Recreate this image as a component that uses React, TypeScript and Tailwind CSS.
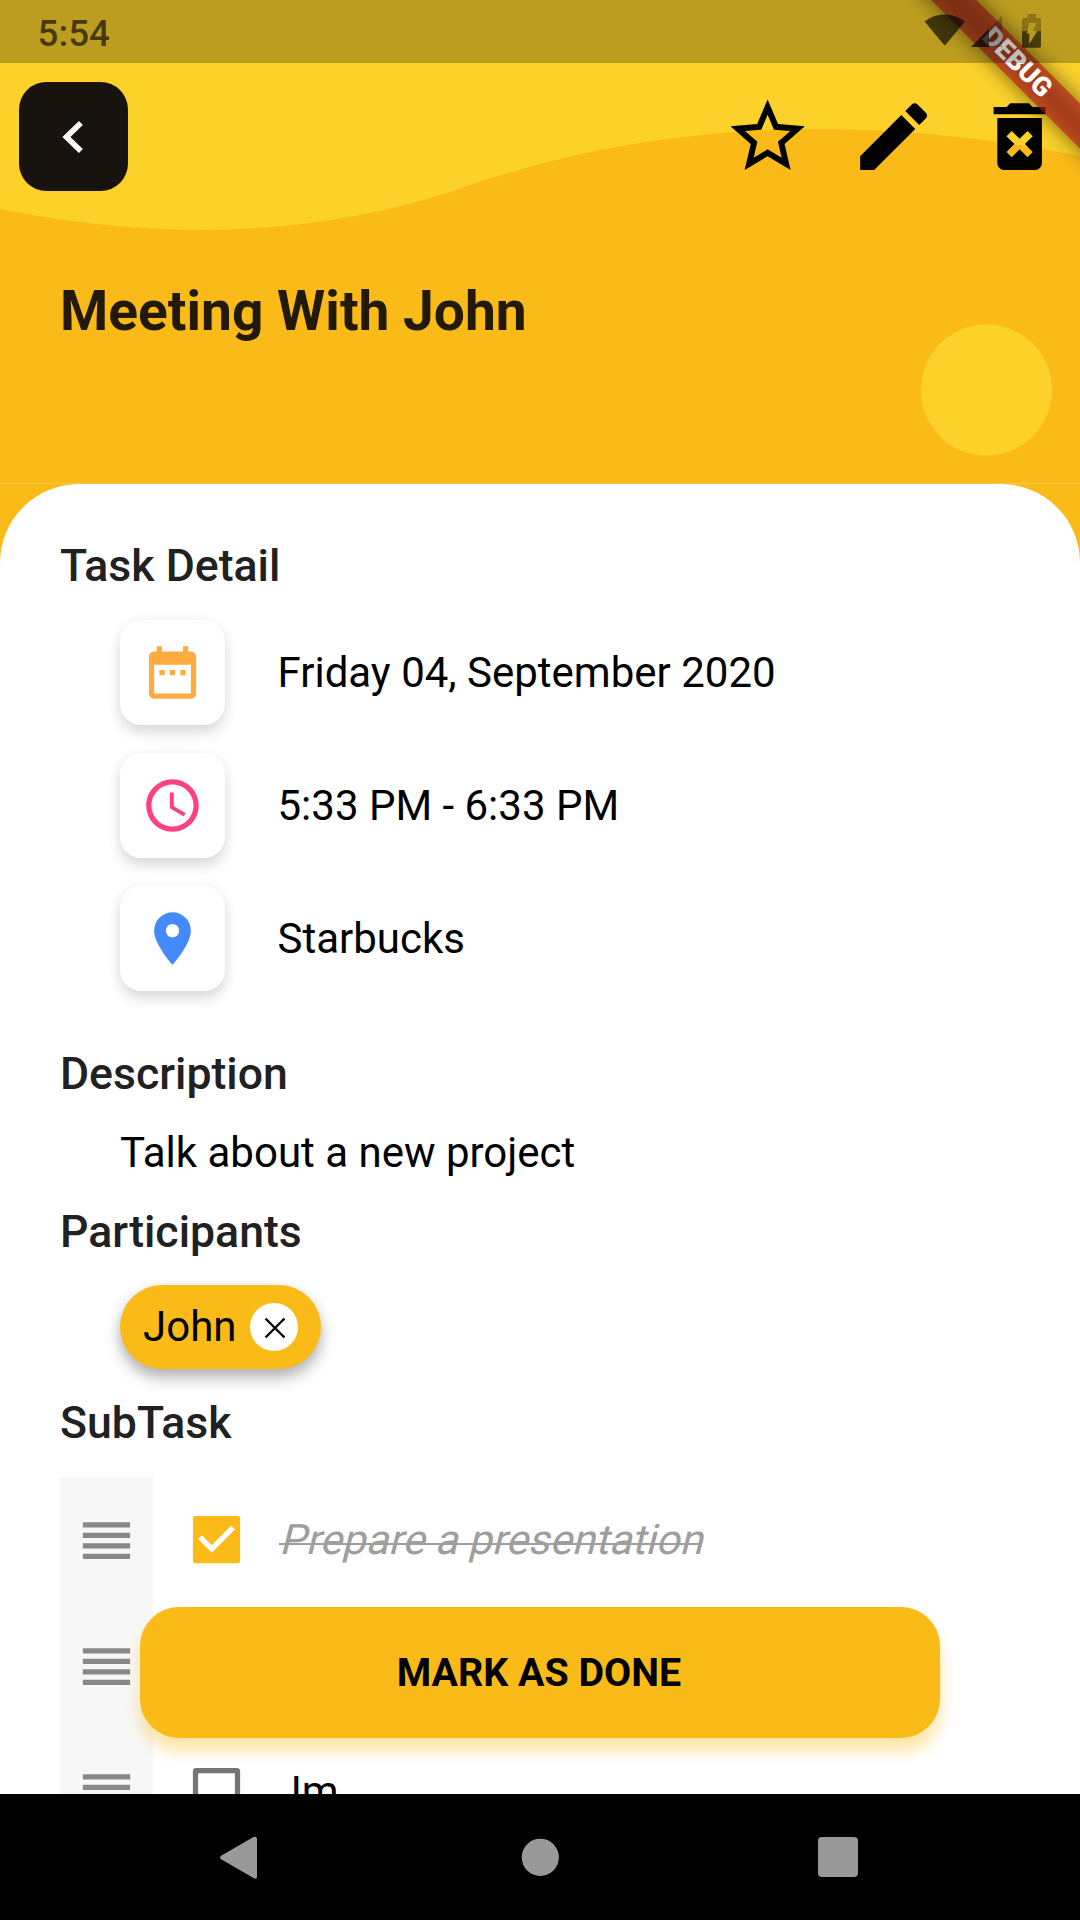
import React from "react";

const icons = {
  star: "M22 9.24l-7.19-.62L12 2 9.19 8.63 2 9.24l5.46 4.73L5.82 21 12 17.27 18.18 21l-1.63-7.03L22 9.24zM12 15.4l-3.76 2.27 1-4.28-3.32-2.88 4.38-.38L12 6.1l1.71 4.04 4.38.38-3.32 2.88 1 4.28L12 15.4z",
  edit: "M3 17.25V21h3.75L17.81 9.94l-3.75-3.75L3 17.25zM20.71 7.04c.39-.39.39-1.02 0-1.41l-2.34-2.34c-.39-.39-1.02-.39-1.41 0l-1.83 1.83 3.75 3.75 1.83-1.83z",
  remove:
    "M6 19c0 1.1.9 2 2 2h8c1.1 0 2-.9 2-2V7H6v12zm2.46-7.12l1.41-1.41L12 12.59l2.12-2.12 1.41 1.41L13.41 14l2.12 2.12-1.41 1.41L12 15.41l-2.12 2.12-1.41-1.41L10.59 14l-2.13-2.12zM15.5 4l-1-1h-5l-1 1H5v2h14V4z",
  date: "M9 11H7v2h2v-2zm4 0h-2v2h2v-2zm4 0h-2v2h2v-2zm2-7h-1V2h-2v2H8V2H6v2H5c-1.11 0-1.99.9-1.99 2L3 20c0 1.1.89 2 2 2h14c1.1 0 2-.9 2-2V6c0-1.1-.9-2-2-2zm0 16H5V9h14v11z",
  clock:
    "M11.99 2C6.47 2 2 6.48 2 12s4.47 10 9.99 10C17.52 22 22 17.52 22 12S17.52 2 11.99 2zM12 20c-4.42 0-8-3.58-8-8s3.58-8 8-8 8 3.58 8 8-3.58 8-8 8zM12.5 7H11v6l5.25 3.15.75-1.23-4.5-2.67z",
  place:
    "M12 2C8.13 2 5 5.13 5 9c0 5.25 7 13 7 13s7-7.75 7-13c0-3.87-3.13-7-7-7zm0 9.5c-1.38 0-2.5-1.12-2.5-2.5s1.12-2.5 2.5-2.5 2.5 1.12 2.5 2.5-1.12 2.5-2.5 2.5z",
  reorder: "M3 15h18v-2H3v2zm0 4h18v-2H3v2zm0-8h18V9H3v2zm0-6v2h18V5H3z",
};

function Icon({ d, className }: { d: string; className: string }) {
  return (
    <svg viewBox="0 0 24 24" fill="currentColor" fillRule="evenodd" className={className}>
      <path d={d} />
    </svg>
  );
}

function StatusBar() {
  return (
    <div className="relative z-20 flex h-[63px] items-center justify-between bg-black/25 pl-[37.600px] pr-[38px]">
      <span className="pt-[3px] text-[36.75px] font-medium leading-[43px] text-black/65">5:54</span>
      <svg viewBox="924 0 118 63" className="h-[63px] w-[118px]">
        <path
          d="M924.6 21.5C936 12 953 12 965 21.5L945.8 44.5Q944.8 46 943.7 44.5Z"
          className="fill-black/65"
        />
        <path d="M1002 16V47H971Z" className="fill-black/25" />
        <path d="M989 29V47H971Z" className="fill-black/60" />
        <path
          d="M1027.5 14h8.500v4h3.300q1.700 0 1.700 1.700V31h-19V19.700q0-1.700 1.700-1.700h3.800z"
          className="fill-black/25"
        />
        <path d="M1022 31h19v15q0 1.700-1.700 1.700h-15.600q-1.700 0-1.700-1.700z" className="fill-black/60" />
        <path d="M1029.300 23H1036.300L1033.300 31H1037.300L1029.300 44V33.500H1027Z" fill="#b99a20" />
      </svg>
    </div>
  );
}

function DebugBanner() {
  return (
    <div className="pointer-events-none absolute right-0 top-0 z-10 h-[260px] w-[260px] overflow-hidden">
      <div className="absolute left-[47px] top-[47.250px] h-[31.500px] w-[300px] rotate-45 bg-black/50 blur-[10.400px]" />
      <div className="absolute left-[47px] top-[47.250px] flex h-[31.500px] w-[300px] rotate-45 items-center justify-center bg-[#b71c1c]/[0.627] text-[26.780px] font-black leading-none text-white">
        DEBUG
      </div>
    </div>
  );
}

function Header() {
  return (
    <header className="relative h-[483px] bg-[#fabb18]">
      <svg viewBox="0 0 1080 483" className="absolute inset-0 h-[483px] w-[1080px]">
        <path d="M0 0H1080V156Q737 88 450 192Q244 258 0 209Z" fill="#fcd22a" />
        <circle cx="986.500" cy="390" r="65.600" fill="#fcd22a" />
      </svg>
      <StatusBar />
      <div className="relative flex h-[147px] items-center justify-between pl-[18.500px]">
        <button className="flex h-[109.800px] w-[109.800px] items-center justify-center rounded-[27.500px] bg-[#18130f]">
          <svg viewBox="0 0 110 110" className="h-[110px] w-[110px]">
            <path d="M62 41L47.500 55L62 69" fill="none" stroke="#fff" strokeWidth="5.600" />
          </svg>
        </button>
        <div className="flex gap-[6px]">
          {[icons.star, icons.edit, icons.remove].map((d) => (
            <button key={d} className="flex h-[120px] w-[120px] items-center justify-center">
              <Icon d={d} className="h-[89.250px] w-[89.250px] text-black" />
            </button>
          ))}
        </div>
      </div>
      <h1 className="relative mt-[68px] pl-[60px] text-[55.125px] font-bold leading-[66px] text-[#221a06]">
        Meeting With John
      </h1>
      <DebugBanner />
    </header>
  );
}

function Heading({ children, className }: { children: string; className: string }) {
  return (
    <h2 className={`text-[44.625px] font-medium leading-[52px] text-[#212121] ${className}`}>{children}</h2>
  );
}

const details = [
  { icon: icons.date, color: "text-[#ffab40]", text: "Friday 04, September 2020" },
  { icon: icons.clock, color: "text-[#ff4081]", text: "5:33 PM - 6:33 PM" },
  { icon: icons.place, color: "text-[#448aff]", text: "Starbucks" },
];

const subtasks = [
  { text: "Prepare a presentation", done: true },
  { text: "", done: false },
  { text: " Im", done: false },
];

function Checkbox({ checked }: { checked: boolean }) {
  return (
    <svg viewBox="0 0 24 24" className="h-[63px] w-[63px]" fill="none">
      {checked ? (
        <>
          <rect x="3" y="3" width="18" height="18" rx="1" fill="#fabb18" />
          <path d="M5.700 11.100L10.200 15.600L18.300 7.500" stroke="#fff" strokeWidth="2" />
        </>
      ) : (
        <rect x="4" y="4" width="16" height="16" rx="0.300" stroke="#757575" strokeWidth="2" strokeLinejoin="round" />
      )}
    </svg>
  );
}

export default function App() {
  return (
    <div className="relative flex h-[1920px] w-[1080px] flex-col overflow-hidden bg-white font-['Roboto',sans-serif]">
      <Header />
      <div className="h-px bg-[#fcc84c]" />
      <div className="min-h-0 flex-1 overflow-hidden bg-[#fabb18]">
        <main className="h-[1400px] rounded-t-[79px] bg-white pl-[60px] pt-[56px]">
          <Heading className="">Task Detail</Heading>
          <ul className="mt-[28px] flex flex-col gap-[28px] pl-[60px]">
            {details.map((item) => (
              <li key={item.text} className="flex items-center gap-[52.500px]">
                <span className="flex h-[105px] w-[105px] items-center justify-center rounded-[21px] bg-white shadow-[0_8px_13px_rgba(0,0,0,0.12),0_1px_14px_rgba(0,0,0,0.05)]">
                  <Icon d={item.icon} className={`h-[63px] w-[63px] ${item.color}`} />
                </span>
                <span className="text-[42px] leading-[50px] text-black">{item.text}</span>
              </li>
            ))}
          </ul>
          <Heading className="mt-[57px]">Description</Heading>
          <p className="mt-[28px] pl-[60px] text-[42px] leading-[50px] text-black">Talk about a new project</p>
          <Heading className="mt-[28px]">Participants</Heading>
          <div className="ml-[60px] mt-[27px] flex h-[84px] w-[200.500px] items-center rounded-[42px] bg-[#fabb18] pl-[23px] shadow-[0_9px_15px_rgba(0,0,0,0.27),0_2px_12px_rgba(0,0,0,0.08)]">
            <span className="w-[107px] text-[42px] leading-[50px] text-black">John</span>
            <span className="flex h-[48px] w-[48px] items-center justify-center rounded-full bg-white pl-[2px]">
              <svg viewBox="0 0 22 22" className="h-[22px] w-[22px] translate-y-px">
                <path d="M1.500 1.500L20.500 20.500M20.500 1.500L1.500 20.500" stroke="#000" strokeWidth="2.300" />
              </svg>
            </span>
          </div>
          <Heading className="mt-[28px]">SubTask</Heading>
          <ul className="mt-[28px]">
            {subtasks.map((task, i) => (
              <li key={i} className="flex h-[126px] items-center">
                <span className="flex h-full w-[93px] items-center justify-center bg-[#f7f7f7]">
                  <Icon d={icons.reorder} className="h-[63px] w-[63px] text-black/45" />
                </span>
                <span className="mb-px ml-[31.500px] mr-[31.500px] flex">
                  <Checkbox checked={task.done} />
                </span>
                {task.done ? (
                  <span className="relative text-[42px] leading-[50px] text-[#9e9e9e] after:absolute after:left-0 after:top-[28px] after:h-[2px] after:w-full after:bg-[#9e9e9e]">
                    <span className="inline-block origin-[0_39px] skew-x-[-14deg]">{task.text}</span>
                  </span>
                ) : (
                  <span className="whitespace-pre pl-px text-[42px] leading-[50px] text-black">{task.text}</span>
                )}
              </li>
            ))}
          </ul>
        </main>
      </div>
      <button className="absolute bottom-[182px] left-[140px] flex h-[131px] w-[800px] items-center justify-center rounded-[39px] bg-[#fabb18] pr-[2px] text-[39.375px] font-bold text-black shadow-[0_13px_16px_rgba(251,188,25,0.4)]">
        MARK AS DONE
      </button>
      <nav className="relative flex h-[126px] shrink-0 items-center justify-center gap-[244px] bg-black">
        <svg viewBox="6 0 54 54" className="h-[54px] w-[54px]" fill="#999">
          <path d="M48 9.500V46.500Q48 50 44.500 48L12.500 29.500Q9.500 27.500 12.500 25.500L44.500 7Q48 6 48 9.500Z" />
        </svg>
        <svg viewBox="0 0 54 54" className="h-[54px] w-[54px]" fill="#999">
          <circle cx="27.300" cy="27.300" r="18.600" />
        </svg>
        <svg viewBox="0 0 54 54" className="h-[54px] w-[54px]" fill="#999">
          <rect x="7" y="7" width="40" height="40" rx="4" />
        </svg>
      </nav>
    </div>
  );
}
